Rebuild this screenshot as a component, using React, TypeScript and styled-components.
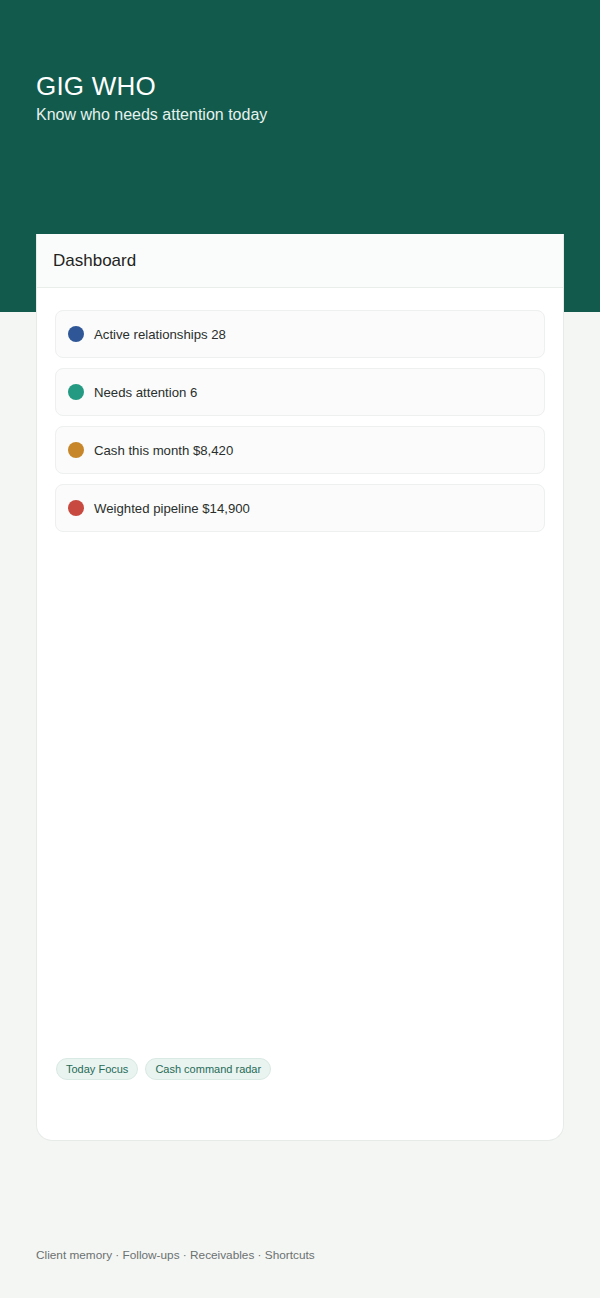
import * as React from 'react'
import styled, { createGlobalStyle } from 'styled-components'

const Global = createGlobalStyle`
  html, body {
    margin: 0;
    padding: 0;
    background: #f4f6f4;
    font-family: "Liberation Sans", Arial, sans-serif;
  }
`

const Page = styled.div`
  min-height: 1298px;
  display: flex;
  flex-direction: column;
`

const Hero = styled.header`
  background: #115a4c;
  height: 312px;
  box-sizing: border-box;
  padding: 71px 36px 0;
  color: #ffffff;
`

const Title = styled.h1`
  margin: 0;
  font-size: 26px;
  font-weight: 400;
  line-height: 30px;
  letter-spacing: 0.2px;
`

const Subtitle = styled.p`
  margin: 4px 0 0;
  font-size: 16px;
  line-height: 20px;
  color: #e6f2ee;
`

const Card = styled.section`
  margin: -78px 36px 0;
  min-height: 907px;
  box-sizing: border-box;
  background: #ffffff;
  border: 1px solid #e6ebe8;
  border-top: none;
  border-radius: 0 0 16px 16px;
  display: flex;
  flex-direction: column;
`

const CardHead = styled.div`
  height: 54px;
  box-sizing: border-box;
  padding: 0 16px;
  display: flex;
  align-items: center;
  background: #fafcfb;
  border-bottom: 1px solid #e9eeeb;
  font-size: 17px;
  color: #1f2422;
`

const CardBody = styled.div`
  flex: 1;
  display: flex;
  flex-direction: column;
  padding: 22px 18px 60px;
`

const StatList = styled.div`
  display: flex;
  flex-direction: column;
  gap: 10px;
`

const Stat = styled.div`
  height: 48px;
  box-sizing: border-box;
  display: flex;
  align-items: center;
  gap: 10px;
  padding: 0 12px;
  background: #fafbfa;
  border: 1px solid #edf0ee;
  border-radius: 8px;
  font-size: 13.2px;
  color: #2a2f2d;
`

const Dot = styled.span<{ $color: string }>`
  width: 16px;
  height: 16px;
  border-radius: 50%;
  background: ${p => p.$color};
  flex: none;
`

const Chips = styled.div`
  margin-top: auto;
  padding-left: 1px;
  display: flex;
  gap: 7px;
`

const Chip = styled.span`
  height: 22px;
  box-sizing: border-box;
  padding: 0 9px;
  display: inline-flex;
  align-items: center;
  border-radius: 11px;
  background: #e9f3f0;
  border: 1px solid #d9e9e3;
  color: #256b57;
  font-size: 11px;
`

const Footer = styled.footer`
  padding: 107px 36px 0;
  font-size: 11.8px;
  color: #6b7170;
`

const stats = [
  { color: '#2f5797', label: 'Active relationships 28' },
  { color: '#249a82', label: 'Needs attention 6' },
  { color: '#c7862a', label: 'Cash this month $8,420' },
  { color: '#c8493f', label: 'Weighted pipeline $14,900' },
]

export default () => (
  <Page>
    <Global />
    <Hero>
      <Title>GIG WHO</Title>
      <Subtitle>Know who needs attention today</Subtitle>
    </Hero>
    <Card>
      <CardHead>Dashboard</CardHead>
      <CardBody>
        <StatList>
          {stats.map(stat => (
            <Stat key={stat.label}>
              <Dot $color={stat.color} />
              {stat.label}
            </Stat>
          ))}
        </StatList>
        <Chips>
          <Chip>Today Focus</Chip>
          <Chip>Cash command radar</Chip>
        </Chips>
      </CardBody>
    </Card>
    <Footer>Client memory · Follow-ups · Receivables · Shortcuts</Footer>
  </Page>
)
